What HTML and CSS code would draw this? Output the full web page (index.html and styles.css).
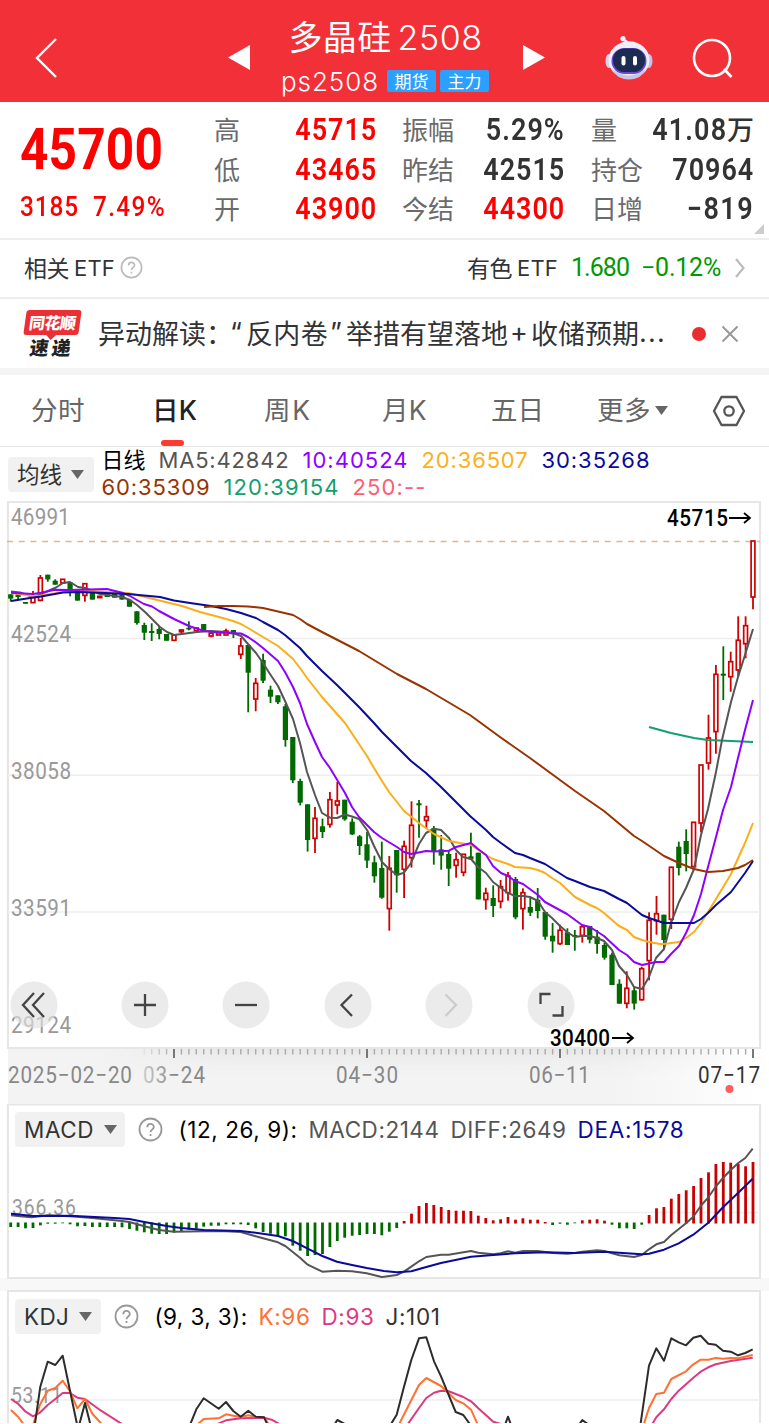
FILE: index.html
```html
<!DOCTYPE html>
<html lang="zh-CN">
<head>
<meta charset="utf-8">
<title>多晶硅2508</title>
<link rel="stylesheet" href="styles.css">
</head>
<body>
<header class="top">
  <svg class="back" width="26" height="42" viewBox="0 0 26 42"><path d="M22 2 3 21 22 40" fill="none" stroke="#fff" stroke-width="2.4"/></svg>
  <svg class="prev" width="22" height="26" viewBox="0 0 22 26"><path d="M22 0V25L0 12.500Z" fill="#fff"/></svg>
  <div class="title">
    <div class="name"><span data-w="103">多晶硅</span><span class="name-num" data-w="85">2508</span></div>
    <div class="code"><span data-w="98">ps2508</span><span class="tag">期货</span><span class="tag">主力</span></div>
  </div>
  <svg class="next" width="22" height="26" viewBox="0 0 22 26"><path d="M0 0V25L22 12.500Z" fill="#fff"/></svg>
  <svg class="robot" width="48" height="46" viewBox="0 0 48 46">
    <path d="M22 9C23 5 19 6 17 4" fill="none" stroke="#e6e4f5" stroke-width="2.500" stroke-linecap="round"/><circle cx="18" cy="3.600" r="2.600" fill="#f4f2fc"/>
    <ellipse cx="4" cy="26" rx="3.500" ry="7" fill="#d4d2ea"/><ellipse cx="44" cy="26" rx="3.500" ry="7" fill="#c5c3e2"/>
    <ellipse cx="24" cy="25" rx="20.500" ry="18.800" fill="#eeedf9"/><path d="M7 34Q23 47 41 34Q37 44 24 44.500Q11 44 7 34" fill="#c9c6e4"/>
    <rect x="6.500" y="13" width="35" height="26" rx="13" fill="#6846d8"/><rect x="8" y="13.500" width="32" height="23.500" rx="11.500" fill="#1e2b50"/>
    <rect x="16.500" y="21" width="4" height="9.500" rx="2" fill="#fff"/><rect x="28" y="21" width="4" height="9.500" rx="2" fill="#fff"/>
  </svg>
  <svg class="search" width="42" height="42" viewBox="0 0 42 42"><circle cx="20" cy="20" r="18" fill="none" stroke="#fff" stroke-width="2.600"/><path d="M32 31 39.500 39" stroke="#fff" stroke-width="2.800"/></svg>
</header>

<section class="quote">
  <div class="price">
    <div class="last"><span data-w="143">45700</span></div>
    <div class="change"><span data-w="59">3185</span><span data-w="73">7.49%</span></div>
  </div>
  <dl class="stats">
    <dt>高</dt><dd class="red"><span data-w="82">45715</span></dd>
    <dt>振幅</dt><dd><span data-w="79">5.29%</span></dd>
    <dt>量</dt><dd><span data-w="75">41.08</span><b class="cjk">万</b></dd>
    <dt>低</dt><dd class="red"><span data-w="82">43465</span></dd>
    <dt>昨结</dt><dd><span data-w="82">42515</span></dd>
    <dt>持仓</dt><dd><span data-w="82">70964</span></dd>
    <dt>开</dt><dd class="red"><span data-w="82">43900</span></dd>
    <dt>今结</dt><dd class="red"><span data-w="82">44300</span></dd>
    <dt>日增</dt><dd><span data-w="67">−819</span></dd>
  </dl>
  <i class="corner"></i>
</section>

<section class="etf">
  <span class="etf-cn" data-w="45">相关</span><span class="etf-en" data-w="41">ETF</span>
  <svg class="help" width="23" height="23" viewBox="0 0 25 25"><use href="#q"/></svg>
  <span class="etf-cn push" data-w="45">有色</span><span class="etf-en" data-w="41">ETF</span>
  <span class="num one" data-w="58">1.680</span><span class="num two" data-w="80">−0.12%</span>
  <svg class="chev" width="12" height="22" viewBox="0 0 12 22"><path d="M2 2 9.500 11 2 20" fill="none" stroke="#bbb" stroke-width="2.200"/></svg>
</section>

<section class="news">
  <div class="brand"><b class="bubble">同花顺</b><b class="express">速递</b></div>
  <div class="headline"><span data-w="108">异动解读</span><span class="colon">：</span><span class="latin open">“</span><span data-w="82">反内卷</span><span class="latin close">”</span><span data-w="162">举措有望落地</span><span class="latin plus">+</span><span data-w="108">收储预期</span><span class="latin" data-w="27">...</span></div>
  <i class="dot"></i>
  <svg width="18" height="18" viewBox="0 0 18 18"><path d="M1.500 1.500 16.500 16.500M16.500 1.500 1.500 16.500" stroke="#999" stroke-width="2"/></svg>
</section>

<nav class="tabs">
  <span><em data-w="54">分时</em></span>
  <span class="on"><em data-w="45">日K</em></span>
  <span><em data-w="48">周K</em></span>
  <span><em data-w="45">月K</em></span>
  <span><em data-w="53">五日</em></span>
  <span><em data-w="54">更多</em><svg class="caret" width="13" height="9" viewBox="0 0 13 9"><path d="M0 0H13L6.500 9Z" fill="#666"/></svg></span>
  <svg width="34" height="32" viewBox="0 0 34 32"><path d="M9.500 2H24.500L32 16 24.500 30H9.500L2 16Z" fill="none" stroke="#555" stroke-width="2.300" stroke-linejoin="round"/><circle cx="17" cy="16" r="4.700" fill="none" stroke="#555" stroke-width="2.300"/></svg>
</nav>

<section class="legend">
  <button class="pick"><span data-w="45">均线</span><svg width="13" height="9" viewBox="0 0 13 9"><path d="M0 0H13L6.500 9Z" fill="#666"/></svg></button>
  <div class="mas">
    <p><span class="black" data-w="44">日线</span><span class="m5" data-w="131">MA5:42842</span><span class="m10" data-w="106">10:40524</span><span class="m20" data-w="107">20:36507</span><span class="m30" data-w="109">30:35268</span></p>
    <p><span class="m60" data-w="109">60:35309</span><span class="m120" data-w="116">120:39154</span><span class="m250" data-w="74">250:--</span></p>
  </div>
</section>

<section class="kline">
  <svg id="kline" width="769" height="547" viewBox="0 501 769 547"></svg>
  <div class="tools">
    <svg viewBox="0 0 48 48"><circle cx="24" cy="24" r="23.500"/><path d="M24 12 13 24 24 36M34 12 23 24 34 36"/></svg>
    <svg viewBox="0 0 48 48"><circle cx="24" cy="24" r="23.500"/><path d="M24 13V35M13 24H35"/></svg>
    <svg viewBox="0 0 48 48"><circle cx="24" cy="24" r="23.500"/><path d="M13 24H35"/></svg>
    <svg viewBox="0 0 48 48"><circle cx="24" cy="24" r="23.500"/><path d="M28 13.500 17.500 24 28 35"/></svg>
    <svg class="off" viewBox="0 0 48 48"><circle cx="24" cy="24" r="23.500"/><path d="M20.500 13.500 31 24 20.500 35"/></svg>
    <svg viewBox="0 0 48 48"><circle cx="24" cy="24" r="23.500"/><path d="M13.500 23V13H23.500M25.500 34.500H35.500V25"/></svg>
  </div>
</section>
<svg id="axis" width="769" height="56" viewBox="0 1048 769 56"></svg>

<section class="panel macd">
  <svg id="macd" width="769" height="175" viewBox="0 1104 769 175"></svg>
  <div class="bar">
    <button class="pick w110"><span data-w="70">MACD</span><svg width="13" height="9" viewBox="0 0 13 9"><path d="M0 0H13L6.500 9Z" fill="#666"/></svg></button>
    <svg class="help" width="25" height="25" viewBox="0 0 25 25"><use href="#q2"/></svg>
    <span class="black" data-w="119">(12, 26, 9):</span><span class="m5" data-w="131">MACD:2144</span><span class="m5" data-w="116">DIFF:2649</span><span class="m30" data-w="107">DEA:1578</span>
  </div>
</section>
<section class="panel kdj">
  <svg id="kdj" width="769" height="134" viewBox="0 1290 769 134"></svg>
  <div class="bar">
    <button class="pick w86"><span data-w="45">KDJ</span><svg width="13" height="9" viewBox="0 0 13 9"><path d="M0 0H13L6.500 9Z" fill="#666"/></svg></button>
    <svg class="help" width="25" height="25" viewBox="0 0 25 25"><use href="#q2"/></svg>
    <span class="black" data-w="93">(9, 3, 3):</span><span class="kk" data-w="52">K:96</span><span class="dd" data-w="53">D:93</span><span class="jj" data-w="55">J:101</span>
  </div>
</section>

<svg class="defs" width="0" height="0"><defs>
  <g id="q" fill="none" stroke="#bbb" stroke-width="1.800"><circle cx="12.500" cy="12.500" r="11"/><path d="M9.300 10.200C9.300 5.800 15.800 5.800 15.800 10C15.800 12.600 12.500 12.300 12.500 15.200M12.500 17V19"/></g>
  <g id="q2" fill="none" stroke="#999" stroke-width="1.800"><circle cx="12.500" cy="12.500" r="11"/><path d="M9.300 10.200C9.300 5.800 15.800 5.800 15.800 10C15.800 12.600 12.500 12.300 12.500 15.200M12.500 17V19"/></g>
</defs></svg>
<script src="chart.js"></script>
</body>
</html>
```
FILE: styles.css
```css
* { box-sizing: border-box; }
body { margin: 0; width: 769px; height: 1424px; overflow: hidden; background: #fff; color: #333; font-family: Inter, "Noto Sans CJK SC", sans-serif; }
p, dl, dd { margin: 0; }
em, i { font-style: normal; }
span { white-space: nowrap; }
svg { display: block; flex: none; }
.defs { height: 0; }
[data-w] { display: inline-block; }

.top { height: 102px; background: #f23037; color: #fff; display: grid; grid-template-columns: 34px 194px 53px 209px 32px 83px 87px 1fr; align-items: start; }
.back { grid-column: 2; margin-top: 37px; }
.prev { margin-top: 45px; }
.title { grid-column: 4; padding-top: 16px; }
.name { display: flex; justify-content: center; height: 46px; line-height: 44px; font-size: 34px; font-weight: 400; gap: 6px; }
.name-num { font-weight: 350; }
.code { display: flex; align-items: center; height: 38px; font-size: 26px; font-weight: 350; }
.code .tag { width: 49px; height: 22px; margin-left: 8px; background: #2ba0ff; border-radius: 2px; font: 400 17px/21px "Noto Sans CJK SC", sans-serif; text-align: center; }
.code .tag + .tag { margin-left: 4px; }
.next { grid-column: 5; margin: 45px 0 0 33px; }
.robot { grid-column: 7; margin-top: 35px; }
.search { margin-top: 38px; }

.quote { position: relative; height: 138px; border-bottom: 2px solid #eee; display: grid; grid-template-columns: 194px 540px; padding: 8px 0 0 20px; }
.price { color: #f00; font-family: Roboto, sans-serif; }
.price span { transform: scaleX(.87); transform-origin: left; }
.last { height: 76px; line-height: 79px; font-size: 57px; font-weight: 700; }
.change { display: flex; gap: 5px; font-size: 28px; line-height: 42px; font-weight: 500; }
.stats { display: grid; grid-template-columns: 64px 99px 25px 64px 99px 26px 64px 99px; grid-auto-rows: 39.500px; font: 400 27px/39px "Noto Sans CJK SC", sans-serif; }
.stats dt { color: #6b6b6b; white-space: nowrap; font-size: 26px; line-height: 38px; }
.stats dt:nth-of-type(3n+1) { grid-column: 1; }
.stats dt:nth-of-type(3n+2) { grid-column: 4; }
.stats dt:nth-of-type(3n) { grid-column: 7; }
.stats dd { display: flex; justify-content: flex-end; font: 600 31px/40px Roboto, sans-serif; }
.stats dd span { transform: scaleX(.87); transform-origin: right; }
.stats .cjk { font: 500 27px/38px "Noto Sans CJK SC", sans-serif; }
.stats .red { color: #f00; }
.corner { position: absolute; right: 5px; bottom: 4px; border-left: 10px solid transparent; border-bottom: 10px solid #ccc; }

.etf { height: 59px; border-bottom: 2px solid #eee; display: flex; align-items: center; padding: 0 24px 2px; font-size: 23px; }
.etf-cn { margin-top: -2px; }
.etf-en { margin-left: 5px; font-size: 22px; }
.etf .help { margin-left: 5px; }
.push { margin-left: auto; }
.num { color: #090; font: 400 25px/30px Roboto, sans-serif; }
.one { margin-left: 13px; }
.two { margin-left: 12px; }
.chev { margin: 0 -1px 0 13px; }

.news { height: 76px; border-bottom: 7px solid #f4f4f4; display: flex; align-items: center; padding: 0 0 0 24px; }
.brand { width: 74px; height: 50px; padding-top: 1px; }
.bubble { display: block; position: relative; width: 55px; height: 25px; margin-left: 1px; background: #ea3034; color: #fff; border-radius: 3px; transform: skewX(-8deg); font: 900 16px/24px "Noto Sans CJK SC", sans-serif; text-align: center; letter-spacing: -.5px; }
.bubble::after { content: ""; position: absolute; left: 23px; top: 25px; border: 5px solid transparent; border-top-color: #ea3034; border-bottom: 0; }
.express { display: block; font: 900 19px/22px "Noto Sans CJK SC", sans-serif; color: #222; transform: skewX(-8deg); padding: 1px 0 0 6px; letter-spacing: 3px; }
.headline { display: flex; width: 594px; font-size: 27px; line-height: 40px; padding-bottom: 2px; font-family: "Noto Sans CJK SC", sans-serif; }
.latin { font-family: Inter, sans-serif; }
.colon { width: 24px; }
.open { width: 16px; }
.close { width: 18px; padding-left: 2px; }
.plus { width: 23px; padding-left: 2px; }
.dot { width: 14px; height: 14px; border-radius: 50%; background: #e92d30; margin-right: 15px; }

.tabs { height: 72px; border-bottom: 1px solid #e8e8e8; display: grid; grid-template-columns: 121px 112px 118px 109px 106px 115px 1fr; align-items: center; padding-left: 31px; font: 400 26.500px/69px Inter, "Noto Sans CJK SC", sans-serif; color: #666; }
.tabs span { display: flex; align-items: center; position: relative; height: 71px; }
.tabs .on { color: #222; font-weight: 500; }
.tabs .on::after { content: ""; position: absolute; left: 9px; bottom: 0; width: 23px; height: 6px; border-radius: 3px; background: #ff3b30; }
.caret { margin-left: 4px; }

.pick { border: 0; margin: 0; padding: 0 0 0 9px; border-radius: 4px; background: #f1f1f1; height: 35px; display: flex; align-items: center; color: #333; font: 400 22.500px/34px Inter, "Noto Sans CJK SC", sans-serif; flex: none; }
.pick svg { margin-left: 10px; }
.legend { height: 54px; display: flex; padding: 0 0 0 8px; }
.legend .pick { width: 86px; margin-top: 10px; }
.legend .pick svg { margin-left: 9px; }
.mas { padding-left: 7.500px; font-size: 22px; line-height: 27px; }
.mas p { display: flex; gap: 13px; height: 27px; }
.black { color: #000; }
.m5 { color: #555; } .m10 { color: #9000ff; } .m20 { color: #fbb01c; } .m30 { color: #0a0a9c; }
.m60 { color: #993300; } .m120 { color: #12a06c; } .m250 { color: #ff5c75; }
.kk { color: #ff7033; } .dd { color: #dc3a80; } .jj { color: #333; }

.kline { position: relative; height: 547px; }
#kline { overflow: visible; }
.tools { position: absolute; left: 10px; top: 480px; display: flex; gap: 53.600px; }
.tools svg { width: 48px; height: 48px; }
.tools svg:first-child { margin-right: 9px; }
.tools circle { fill: rgba(225, 225, 225, .65); }
.tools path { fill: none; stroke: #444; stroke-width: 2.300; }
.tools .off path { stroke: #ccc; }

.panel { position: relative; }
.bar { position: absolute; left: 15px; top: 8px; display: flex; align-items: center; font-size: 22.500px; height: 35px; }
.macd { height: 187px; background: linear-gradient(#fff 174px, #f8f8f8 174px); }
.bar .help { margin: 0 15.500px 0 13px; }
.w110 { width: 110px; }
.w86 { width: 86px; }
.bar > span + span { margin-left: 11px; }
.kdj { height: 133px; margin-top: -1px; overflow: hidden; }
.kdj .bar { top: 9px; }
```
FILE: chart.js
```javascript
const X0 = 10.7, STEP = 7.423;
const xAt = i => X0 + i * STEP;

// Candles: [direction, bodyTop, bodyBottom, high, low], in thirds of a pixel below each block's top.
const candleBlocks = [
  [500, [['g',283,296,283,305],['g',283,291,283,298],['g',306,311],['r',292,308,273,308],['r',234,301,225,304],['g',224,238,224,245],['g',242,254,238,254],['r',238,249],['g',247,278,247,289],['g',268,302],['r',251,286,249,305],['g',277,299],['r',289,293],['g',281,291],['g',281,293],['g',283,299],['g',299,320],['g',334,369,334,374],['g',375,398,368,420],['g',393,399,370,423],['g',387,402,378,418],['g',402,422],['r',405,421],['r',390,395,388,401],['g',383,388,364,391],['r',384,392],['g',372,392],['r',400,408,396,412],['r',398,405],['r',393,405,386,405],['g',390,403,390,414],['r',438,463,414,477],['g',435,518,435,637],['r',550,597,534,634]]],
  [600, [['g',180,242,161,249],['g',269,290,257,309],['g',286,307,286,312],['g',319,420,312,440],['g',411,541,411,549],['g',543,608,536,616],['g',613,720,613,755],['r',655,715,621,759],['g',679,696,656,714],['r',599,673,576,683],['r',603,615,546,643],['g',599,658,599,662],['g',665,703,655,705],['g',709,738,705,765],['g',733,782,696,804],['g',787,829,767,848],['g',804,893,725,896],['r',805,926,768,992],['g',750,826,750,878],['r',739,808,722,894],['r',676,773,604,803],['g',610,616,600,713],['r',650,661,617,684],['g',685,756,678,794],['g',748,767,705,809],['g',762,806,750,858],['r',779,796,758,833],['r',763,817,763,829]]],
  [780, [['g',229,238,158,238],['g',218,358],['r',340,359,323,389],['g',354,378,316,411],['r',320,364,300,385],['r',288,338,276,362],['g',297,412,291,418],['r',338,386,325,449],['g',381,398,353,408],['g',359,393,324,415],['g',396,470,396,479],['g',467,484,429,518],['r',451,491,434,495],['g',457,495,445,495],['g',465,470,450,512],['r',440,466,433,488],['g',438,479,438,490],['g',470,492,450,521],['g',495,533,488,539],['g',524,615,518,615],['g',611,671,598,671],['r',625,670,574,685],['g',631,671,622,689],['r',566,659,560,662],['r',421,542,397,601],['r',401,422,348,464]]],
  [740, [['g',524,600,524,628],['r',382,538,380,567],['g',320,384,305,406],['g',303,342,268,394],['r',247,380],['r',75,249,75,277]]],
  [500, [['r',714,789,644,809],['r',523,695,495,761],['g',521,527,439,600],['r',485,530,455,575],['r',421,510,349,530],['r',377,431,349,475],['r',123,291,123,328]]]
];

const averages = [
  ['#12a06c', '649,727 671,733 694,738 708,740 731,741 753,742'],
  ['#555', '11,591.5 20,592.5 33,597 41,594 48,591 56,587.5 63,583 70,582 78,587 85,588 93,591 100,594 115,596 122,597 130,600 137,605 145,612 152,619 160,627 167,632 174,635 182,634 197,632 211,631 226,632 233,633 241,636 248,644 256,653 263,663 270,674 278,686 285,701 293,719 300,743 307,772 315,795 322,813 330,817.7 337,818 345,814.5 352,816.5 359,819 367,830 374,846 382,862 389,869 397,875 404,872.7 411,863 419,844 426,833 434,828.7 441,830 449,838 456,850 463,857 471,859 478,867 486,873 493,882 501,888 508,893 515,896 523,896 530,897 538,901 545,912 552,918 560,926 567,932 575,937 582,936 590,936 597,938 604,941 612,950 619,966 627,975 634,987 642,989 649,977 656,958 664,949 671,923 679,902 686,888 694,869 701,835 708,809 716,772 722,740 731,702 738,677 745,655 753,629'],
  ['#fbae17', '11,593 33,596 41,595.5 63,592 93,591 107,592 128,593 145,597 182,606 200,612 219,617 233,621 241,624 248,628 263,637 278,646 285,652 293,659 300,668 307,678 322,697 337,714 345,723 359,744 367,756 374,768 382,781 389,792 397,802 404,811 419,823 434,834 449,841 471,845 486,855 493,859 508,864 515,867 530,868 538,870 545,873 552,878 560,883 575,897 590,905 597,908 604,913 619,926 627,930 634,937 642,940 649,942 660,944 664,944 679,942 686,938 694,932 701,923 708,912 716,899 731,874 745,843 753,823'],
  ['#9000ff', '11,592.7 33,594 41,592.7 55,589.7 70,590 107,589 122,592.7 129,595.5 144,604 152,606.5 159,611 174,619 189,626 204,631 219,632.5 241,633.5 248,637 256,642.5 263,648 278,661 285,672 293,687 300,703 307,724 315,742 322,757 330,768 345,793 352,807 359,817 374,832 382,838 397,847 404,852 411,854 426,851 434,851.5 449,850.7 456,847 471,843 478,849 486,855 493,866 501,873 508,876 515,881 523,884 538,895 545,902 567,914 582,925 590,927 604,936 619,950 627,955 634,962 642,965 656,962 664,962 671,954 679,946 686,933 694,915 701,894 708,867 716,837 723,810 731,787 738,758 745,730 753,700'],
  ['#0a0a9c', '11,601 30,598 41,596.5 63,592.5 78,592 93,592.5 128,594 160,597 174,600.5 190,603 211,606 226,609 241,613 256,618 263,622 278,630 285,635 300,648 307,656 322,671 337,685 359,707 374,723 382,732 397,747 411,761 426,773 441,787 449,795 470,816 486,830 493,837 501,843 515,853 523,855 530,858 545,864 567,878 575,881 590,887 604,891 619,899 627,903 642,915 649,918 664,923 694,923 701,919 708,913 716,905 731,892 745,873 753,861'],
  ['#993300', '204,607 219,606 233,606 248,606.5 263,608 278,611.5 293,615 300,619 307,624 322,632 359,651 397,674 426,689 470,715 500,737 530,758 560,780 575,791 604,811 634,836 642,841 664,856 679,863 694,869 708,872 723,871 738,868 745,865 753,860']
];

const line = (pts, color, w = 2) => `<polyline points="${pts}" fill="none" stroke="${color}" stroke-width="${w}" stroke-linejoin="round"/>`;
const rect = (x, y, w, h, fill) => `<rect x="${x.toFixed(1)}" y="${y.toFixed(1)}" width="${w}" height="${h.toFixed(1)}" fill="${fill}"/>`;
// Narrow numerals: glyphs are drawn at 88% width and tracked out to w.
const label = (x, y, w, text, fill = '#999', weight = 400, size = 23.5) => `<text transform="translate(${x} ${y}) scale(.88 1)" textLength="${(w / 0.88).toFixed(1)}" fill="${fill}" font-family="Roboto" font-weight="${weight}" font-size="${size}">${text}</text>`;
const arrow = (x, y) => `<path d="M${x} ${y}H${x + 21}M${x + 15} ${y - 5}L${x + 21} ${y}L${x + 15} ${y + 5}" fill="none" stroke="#000" stroke-width="1.8"/>`;

let k = '<path d="M8 502H760V1048H8Z" fill="none" stroke="#e6e6e6" stroke-width="2"/>';
for (const y of [638.5, 775.3, 912]) k += `<path d="M8 ${y}H760" stroke="#eee" stroke-width="1.6"/>`;
k += '<path d="M7 541.5H760" stroke="#dcb98a" stroke-width="1.4" stroke-dasharray="6 5.72"/>';
k += label(11, 525, 59, '46991') + label(11, 642, 60, '42524') + label(11, 779, 60, '38058') + label(11, 915.5, 60, '33591') + label(11, 1032.5, 60, '29124');
let n = 0;
for (const [top, rows] of candleBlocks) {
  for (const [dir, a, b, hi = a, lo = b] of rows) {
    const x = xAt(n++), y = v => top + v / 3, up = dir === 'r', c = up ? '#d00000' : '#006a00';
    k += rect(x - 0.9, y(hi), 1.8, y(lo) - y(hi), c);
    if (up) k += `<rect x="${(x - 1.9).toFixed(1)}" y="${(y(a)).toFixed(1)}" width="3.8" height="${Math.max(y(b) - y(a), 1).toFixed(1)}" fill="#fff" stroke="${c}" stroke-width="1.7"/>`;
    else k += rect(x - 2.6, y(a), 5.2, y(b) - y(a), c);
  }
}
for (const [c, pts] of averages) k += line(pts, c);
k += label(667, 526, 61, '45715', '#000', 500) + arrow(729, 518);
k += label(550, 1046, 60, '30400', '#000', 500) + arrow(612, 1038);
document.getElementById('kline').innerHTML = k;

// Time axis with ruler ticks fading in from the left.
let a = '<defs><linearGradient id="ag"><stop stop-color="#f3f3f3"/><stop offset=".8" stop-color="#f3f3f3"/><stop offset="1" stop-color="#fff"/></linearGradient><linearGradient id="av" x2="0" y2="1"><stop stop-color="#ddd" stop-opacity=".55"/><stop offset="1" stop-color="#f3f3f3" stop-opacity="0"/></linearGradient><linearGradient id="am"><stop stop-color="#000"/><stop offset=".2" stop-color="#fff"/><stop offset=".8" stop-color="#fff"/><stop offset="1" stop-color="#000"/></linearGradient><mask id="mk"><rect x="100" y="1048" width="640" height="30" fill="url(#am)"/></mask><linearGradient id="fade"><stop stop-color="#ccc"/><stop offset=".5" stop-color="#888"/></linearGradient></defs>';
a += '<rect x="8" y="1048" width="753" height="56" fill="url(#ag)"/><rect x="100" y="1048" width="640" height="28" fill="url(#av)" mask="url(#mk)"/>';
for (let i = 18; i <= 100; i++) {
  const major = (i - 22) % 26 === 0;
  a += `<rect x="${(xAt(i) - (major ? 1 : 0.7)).toFixed(1)}" y="1049" width="${major ? 2 : 1.4}" height="${major ? 9 : 5.5}" fill="${major ? '#777' : '#aaa'}" opacity="${Math.min(1, (i - 17) / 5)}"/>`;
}
a += label(8, 1083, 124, '2025−02−20', '#888') + label(143, 1083, 62, '03−24', 'url(#fade)') + label(336, 1083, 62, '04−30', '#888') + label(529, 1083, 61, '06−11', '#888') + label(698, 1083, 62, '07−17', '#333');
a += '<circle cx="729.500" cy="1089" r="4" fill="#fb5f60"/>';
document.getElementById('axis').innerHTML = a;

// MACD histogram ends and lines, in thirds of a pixel below y = 1100.
const bars = [381,381,385,384,376,371,371,370,373,379,378,381,381,381,381,382,387,392,397,401,402,402,398,395,389,386,380,377,377,373,373,373,375,385,396,401,407,409,437,452,468,465,462,441,423,413,407,405,402,402,406,395,384,363,341,318,309,315,321,330,332,332,333,347,354,361,358,351,359,355,359,359,366,375,371,374,370,361,359,358,362,374,385,385,387,374,345,325,321,296,282,271,258,234,217,192,186,188,192,199,186];
const third = (left, top, s) => s.trim().split(/\s+/).map(p => { const [x, y] = p.split(',').map(Number); return (left + x / 3).toFixed(1) + ',' + (top + y / 3).toFixed(1); }).join(' ');
const diff = third(0, 1100, '33,346 60,349 95,352 121,349 143,346 210,349 277,354 366,363 388,366 433,379 477,390 522,395 611,394 678,394 722,396 767,409 834,427 856,438 900,473 923,494 967,515 1011,512 1056,514 1100,520 1145,531') + ' ' +
  third(384, 1100, '0,530 38,525 60,515 82,500 105,484 127,471 171,464 194,464 261,453 283,458 328,463 350,460 372,454 394,458 417,453 461,453 506,459 550,461 572,459 595,455 639,451 661,453 706,466 750,471 773,465 795,448 817,433 840,426 862,405 906,370 928,350 950,318 973,292 995,260 1017,234 1040,210 1062,190 1084,174 1106,146');
const dea = third(0, 1100, '33,341 99,348 210,347 344,354 388,357 433,366 500,378 544,384 611,390 722,393 767,398 834,408 878,423 923,446 967,468 1011,485 1056,495 1100,504') + ' ' +
  third(384, 1100, '0,513 38,517 82,514 127,501 171,489 261,470 328,465 394,460 483,457 572,459 661,455 706,458 773,463 795,461 840,449 884,430 928,404 973,368 1017,322 1062,279 1106,236');
let m = '<path d="M8 1104.500H760V1278H8Z" fill="#fff" stroke="#e6e6e6" stroke-width="2"/><path d="M8 1212.500H760" stroke="#eee" stroke-width="1.600"/>' + label(12, 1215, 64, '366.36', '#999', 400, 22);
bars.forEach((b, i) => {
  const y = 1100 + b / 3;
  m += b > 368 ? rect(xAt(i) - 1.4, 1222.5, 2.8, y - 1222.5, '#006a00') : rect(xAt(i) - 1.4, y, 2.8, 1223.5 - y, '#c80000');
});
document.getElementById('macd').innerHTML = m + line(diff, '#555') + line(dea, '#0a0a9c');

const pieces = [
  ['#dc3a80', 0, '33,345 55,360 77,383 99,397 121,385 143,363 166,345 188,327 210,327 232,341 255,345 303,380 372,424'],
  ['#dc3a80', 0, '640,425 678,409 722,403 792,401 815,407 845,424'],
  ['#dc3a80', 384, '68,425 105,372 127,342 150,326 171,320 194,322 238,339 261,352 283,373 328,413 360,423'],
  ['#dc3a80', 384, '802,425 817,400 840,376 862,345 884,320 928,281 950,263 973,250 995,241 1040,231 1106,221'],
  ['#ff7033', 0, '33,378 55,399 74,425'],
  ['#ff7033', 0, '98,425 121,360 143,320 166,312 188,290 210,322 232,373 255,345 277,389 310,425'],
  ['#ff7033', 0, '588,425 611,405 656,403 678,391 700,395 722,399 745,394 767,399 792,400 809,425'],
  ['#ff7033', 384, '43,425 105,303 127,282 171,306 215,348 238,358 261,377 283,425'],
  ['#ff7033', 384, '778,425 795,372 817,330 840,326 862,285 906,262 928,241 950,227 973,227 995,222 1017,224 1040,222 1062,223 1106,213'],
  ['#2c2c2c', 0, '104,425 121,308 143,233 166,243 188,215 210,320 232,425 237,425 255,357 272,425'],
  ['#2c2c2c', 0, '569,425 589,376 611,343 656,374 678,354 700,381 722,398 745,380 767,398 792,400 804,425'],
  ['#2c2c2c', 0, '1001,425 1012,408 1040,423'],
  ['#2c2c2c', 384, '18,425 38,392 60,308 82,228 105,163 127,160 150,232 171,277 215,384 238,393 261,425'],
  ['#2c2c2c', 384, '362,425 372,398 382,425'],
  ['#2c2c2c', 384, '583,425 595,408 615,423'],
  ['#2c2c2c', 384, '769,425 795,245 817,193 840,230 862,163 884,175 906,184 928,161 950,155 973,179 995,182 1017,200 1040,203 1062,214 1084,207 1106,196']
];
let d = '<path d="M8 1430V1291H760V1430" fill="#fff" stroke="#e6e6e6" stroke-width="2"/><path d="M8 1400H760" stroke="#eee" stroke-width="1.600"/>' + label(11, 1403, 51, '53.11', '#999', 400, 22);
for (const [c, left, pts] of pieces) d += line(third(left, 1284, pts), c);
document.getElementById('kdj').innerHTML = d;

document.querySelectorAll('[data-w]').forEach(el => {
  const m = getComputedStyle(el).transform;
  const scale = m === 'none' ? 1 : new DOMMatrix(m).a;
  const gap = (Number(el.dataset.w) - el.getBoundingClientRect().width) / el.textContent.length / scale;
  el.style.letterSpacing = gap.toFixed(3) + 'px';
});
```
